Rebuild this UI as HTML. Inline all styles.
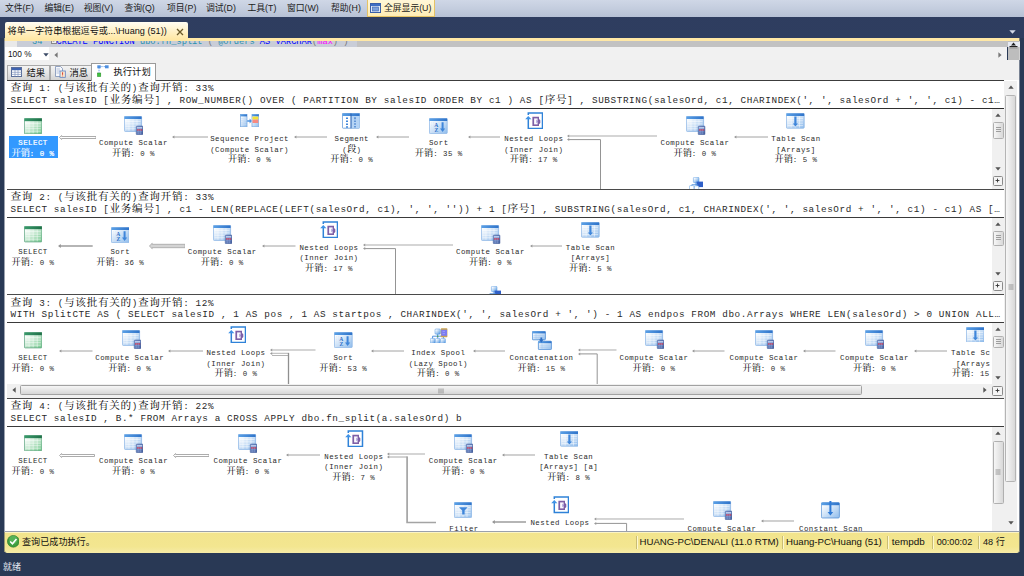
<!DOCTYPE html>
<html lang="zh-CN"><head><meta charset="utf-8"><title>SSMS</title><style>
*{box-sizing:border-box;margin:0;padding:0}
html,body{width:1024px;height:576px;overflow:hidden;background:#293955}
body{position:relative;font-family:"Liberation Sans","Noto Sans CJK SC",sans-serif;font-size:9px;color:#000;line-height:1}
.a{position:absolute}
.menubar{left:0;top:0;width:1024px;height:17px;background:linear-gradient(#cfd7e6,#c4cdde 50%,#b6c1d5)}
.mi{position:absolute;top:0;height:17px;line-height:17px;font-size:8.8px;color:#1b1b1b;white-space:nowrap}
.band{left:0;top:17px;width:1024px;height:21px;background-color:#2b3a5c;background-image:radial-gradient(circle,#364569 0.5px,transparent 0.8px);background-size:2px 2px}
.yline{left:5px;top:38px;width:1014px;height:3px;background:#ffe8a6}
.doctab{left:5px;top:22px;width:183px;height:17px;background:linear-gradient(#fffdf3,#fff3cf 45%,#ffe8a6);border-radius:2px 2px 0 0}
.doctab span{position:absolute;left:2.5px;top:0;line-height:18px;font-size:9.15px;white-space:nowrap;color:#111}
.mono{font-family:"Liberation Mono","Noto Serif CJK SC",monospace}
.hdr{position:absolute;left:10.5px;white-space:pre;font-family:"Liberation Mono","Noto Serif CJK SC",monospace;font-size:9.3px;letter-spacing:0.61px;height:13px;line-height:13px;color:#2a2a2a}
.hdr b{font-weight:normal;font-size:10.6px;letter-spacing:0.7px;color:#000}
.nl{position:absolute;width:140px;text-align:center;white-space:pre;font-family:"Liberation Mono","Noto Serif CJK SC",monospace;font-size:7.4px;letter-spacing:0.49px;height:10px;line-height:10px;color:#2a2a2a}
.nl b{font-weight:normal;font-size:9.2px;letter-spacing:0;color:#000}
.hl{position:absolute;background:#3399ff}
.nl.w{color:#fff;-webkit-text-stroke:0.2px #fff}
.nl.w b{color:#fff;-webkit-text-stroke:0.15px #fff}
.pane{position:absolute;background:#fff;overflow:hidden}
.sb{position:absolute;background:#f0f0f0}
.st{position:absolute;top:533px;height:19px;line-height:18px;font-size:9.15px;white-space:nowrap;color:#111}
.sep{position:absolute;top:536px;width:1px;height:13px;background:#c9bd74;border-right:1px solid #fdf7cf;box-sizing:content-box}
</style></head><body>
<div class="a menubar"></div>
<div class="mi" style="left:5px">文件(F)</div>
<div class="mi" style="left:44.5px">编辑(E)</div>
<div class="mi" style="left:83.8px">视图(V)</div>
<div class="mi" style="left:124.5px">查询(Q)</div>
<div class="mi" style="left:167px">项目(P)</div>
<div class="mi" style="left:206px">调试(D)</div>
<div class="mi" style="left:247.5px">工具(T)</div>
<div class="mi" style="left:287px">窗口(W)</div>
<div class="mi" style="left:331px">帮助(H)</div>
<div class="a" style="left:366.5px;top:0;width:68px;height:17px;background:linear-gradient(#fff7d8,#ffedb5);border:1px solid #e5c365;border-top:none"></div>
<svg class="a" style="left:369.5px;top:3px" width="11" height="10" viewBox="0 0 11 10"><rect x="0.5" y="0.5" width="10" height="9" fill="#dfeaf8" stroke="#3a5fa8"/><rect x="1" y="1" width="9" height="2" fill="#3f6fc4"/><rect x="2.5" y="4" width="6" height="4" fill="#7da2dc" stroke="#3a5fa8" stroke-width="0.6"/></svg>
<div class="mi" style="left:384px">全屏显示(U)</div>
<div class="a band"></div>
<div class="a yline"></div>
<div class="a doctab"><span>将单一字符串根据逗号或...\Huang (51))</span><svg class="a" style="left:171px;top:5.5px" width="8" height="8" viewBox="0 0 8 8"><path d="M1 1L7 7M7 1L1 7" stroke="#6b5a2a" stroke-width="1.3" fill="none"/></svg></div>
<svg class="a" style="left:1008.6px;top:29.6px" width="7" height="4" viewBox="0 0 7 4"><path d="M0.3 0.3H6.7L3.5 3.7Z" fill="#d5dbe8"/></svg>
<div class="a" style="left:5px;top:41px;width:1014px;height:6px;background:#c2c2c2;overflow:hidden"><div class="a" style="left:0;top:0;width:12px;height:6px;background:#e9e9e9"></div><div class="a" style="left:12px;top:0;width:340px;height:6px;background:#c9cdd7"></div><div class="a mono" style="left:27px;top:-4px;font-size:8.7px;line-height:10px;white-space:pre;color:#2b91af">34</div><div class="a" style="left:45.5px;top:-3px;width:6px;height:6px;border:1px solid #888;background:#eee;font-size:6px;line-height:4px;text-align:center;color:#555">-</div><div class="a mono" style="left:51.5px;top:-4px;font-size:8.7px;line-height:10px;white-space:pre;color:#00f">CREATE FUNCTION <span style="color:#2b91af">dbo.fn_split</span> <span style="color:#777">(</span> <span style="color:#2b91af">@orders</span> AS VARCHAR<span style="color:#777">(</span><span style="color:#f0f">max</span><span style="color:#777">) )</span></div></div>
<div class="a" style="left:1007.5px;top:41px;width:12px;height:19px;background:#bdbdbd"></div>
<div class="a" style="left:1007.5px;top:41.5px;width:12px;height:5.5px;background:#e6eaf3"></div>
<svg class="a" style="left:1009px;top:42px" width="9" height="7" viewBox="0 0 9 7"><path d="M4.5 0.5L7 3.5H2Z" fill="#222"/><rect x="0.5" y="4" width="8" height="1" fill="#222"/><rect x="0.5" y="5.6" width="8" height="0.7" fill="#777"/></svg>
<div class="a" style="left:5px;top:47px;width:1002px;height:13px;background:#f1f1f1"></div>
<div class="a" style="left:5px;top:47px;width:44px;height:13px;background:#fff"></div>
<div class="a" style="left:8px;top:47px;line-height:14px;font-size:8.3px;color:#111">100 %</div>
<svg class="a" style="left:42.5px;top:53px" width="6" height="4" viewBox="0 0 6 4"><path d="M0.3 0.3H5.7L3 3.6Z" fill="#3b4a66"/></svg>
<svg class="a" style="left:54px;top:51.5px" width="4" height="6" viewBox="0 0 4 6"><path d="M3.6 0.3V5.7L0.4 3Z" fill="#777"/></svg>
<svg class="a" style="left:998px;top:51.5px" width="4" height="6" viewBox="0 0 4 6"><path d="M0.4 0.3V5.7L3.6 3Z" fill="#777"/></svg>
<div class="a" style="left:5px;top:60px;width:1014px;height:472px;background:#f0f0f0"></div>
<div class="a" style="left:6.5px;top:64.5px;width:43px;height:15px;background:linear-gradient(#f3f3f3,#e6e6e6 50%,#d2d2d2);border:1px solid #a9a9a9;border-bottom:none"></div>
<div class="a" style="left:49.5px;top:64.5px;width:42px;height:15px;background:linear-gradient(#f3f3f3,#e6e6e6 50%,#d2d2d2);border:1px solid #a9a9a9;border-bottom:none"></div>
<svg class="a" style="left:11px;top:67px" width="11" height="10" viewBox="0 0 11 10"><rect x="0.5" y="0.5" width="10" height="9" fill="#fff" stroke="#5a6e9a"/><rect x="1" y="1" width="9" height="2.2" fill="#3f63b0"/><path d="M4 3V9.5M7 3V9.5M0.5 5.3H10.5M0.5 7.4H10.5" stroke="#7f93bd" stroke-width="0.7"/></svg>
<div class="a" style="left:26.5px;top:64.5px;line-height:17px;font-size:9.3px;color:#111">结果</div>
<svg class="a" style="left:54.5px;top:66px" width="11" height="12" viewBox="0 0 11 12"><path d="M0.5 0.5H5.5L7.5 2.5V10.5H0.5Z" fill="#f6f8fc" stroke="#7b8fb5" stroke-width="0.8"/><path d="M1.5 3H5M1.5 5H5M1.5 7H4" stroke="#9fb0cf" stroke-width="0.7"/><rect x="5" y="5" width="5.3" height="6.3" fill="#fbe9d0" stroke="#5b7fc0" stroke-width="0.8"/><path d="M7.6 6.3V8.8M7.6 9.6V10.3" stroke="#d23a2a" stroke-width="1"/></svg>
<div class="a" style="left:69.5px;top:64.5px;line-height:17px;font-size:9.3px;color:#111">消息</div>
<svg class="a" style="left:0;top:0" width="0" height="0"><defs>
<linearGradient id="gB" x1="0" y1="0" x2="1" y2="1"><stop offset="0.1" stop-color="#ffffff"/><stop offset="1" stop-color="#8fbcec"/></linearGradient>
<linearGradient id="gH" x1="0" y1="0" x2="1" y2="0"><stop offset="0" stop-color="#5aa0e6"/><stop offset="1" stop-color="#2f73c9"/></linearGradient>
<linearGradient id="gG" x1="0" y1="0" x2="1" y2="1"><stop offset="0.12" stop-color="#ffffff"/><stop offset="1" stop-color="#74c98e"/></linearGradient>
<linearGradient id="gGH" x1="0" y1="0" x2="1" y2="0"><stop offset="0" stop-color="#3a9a6c"/><stop offset="1" stop-color="#1f7048"/></linearGradient>
<linearGradient id="gC" x1="0" y1="0" x2="1" y2="1"><stop offset="0" stop-color="#7d9bd2"/><stop offset="1" stop-color="#3c5796"/></linearGradient>
<linearGradient id="gT" x1="0" y1="0" x2="0" y2="1"><stop offset="0" stop-color="#f8f8f8"/><stop offset="1" stop-color="#d4d4d4"/></linearGradient>
<linearGradient id="gTv" x1="0" y1="0" x2="1" y2="0"><stop offset="0" stop-color="#f8f8f8"/><stop offset="1" stop-color="#d4d4d4"/></linearGradient>
<linearGradient id="gBox" x1="0" y1="0" x2="1" y2="1"><stop offset="0.15" stop-color="#ffffff"/><stop offset="1" stop-color="#4d94e0"/></linearGradient>
</defs></svg>
<div class="a" style="left:5px;top:80px;width:1014px;height:452px;background:#fff"></div>
<div class="a" style="left:7px;top:80px;width:997px;height:1px;background:#3c3c3c"></div>
<div class="hdr" style="top:82.1px"><b>查询</b> 1: (<b>与该批有关的</b>)<b>查询开销</b>: 33%</div>
<div class="hdr" style="top:93.8px">SELECT salesID [<b>业务编号</b>] , ROW_NUMBER() OVER ( PARTITION BY salesID ORDER BY c1 ) AS [<b>序号</b>] , SUBSTRING(salesOrd, c1, CHARINDEX(', ', salesOrd + ', ', c1) - c1…</div>
<div class="a" style="left:7px;top:108px;width:997px;height:1px;background:#2e2e2e"></div>
<div class="pane" style="left:7px;top:109px;width:985px;height:80px">
<div class="a" style="left:-7px;top:-109px;width:1024px;height:576px">
<div class="hl" style="left:8.5px;top:136.2px;width:49.2px;height:21.6px"></div>
<svg class="a" style="left:23.8px;top:117.6px" width="18.3" height="16.3" viewBox="0 0 18.3 16.3"><rect x="0.4" y="0.4" width="17.5" height="15.5" rx="0.8" fill="url(#gG)" stroke="#5fa582" stroke-width="0.8"/><rect x="0.4" y="0.4" width="17.5" height="2.8" fill="url(#gGH)"/><path d="M1.5 5.70H16.8M1.5 8.20H16.8M1.5 10.70H16.8M1.5 13.20H16.8M5.08 3.5999999999999996V15.3M9.15 3.5999999999999996V15.3M13.23 3.5999999999999996V15.3" stroke="#ffffff" stroke-width="0.5" fill="none"/></svg>
<div class="nl w" style="left:-37.00px;top:138.30px">SELECT</div><div class="nl w" style="left:-37.00px;top:149.40px"><b>开销</b>: 0 %</div>
<svg class="a" style="left:58.5px;top:133px" width="37.5" height="9" viewBox="0 0 37.5 9"><path d="M0.5 4.5L2.6 2.5V3.5H37.0V5.5H2.6V6.5Z" fill="#ffffff" stroke="#a3a3a3" stroke-width="0.9"/></svg>
<svg class="a" style="left:124px;top:116px" width="19.4" height="19" viewBox="0 0 19.4 19"><rect x="0.4" y="0.4" width="17.2" height="15.0" rx="0.8" fill="url(#gB)" stroke="#8db6e6" stroke-width="0.8"/><rect x="0.4" y="0.4" width="17.2" height="2.6" fill="url(#gH)"/><path d="M1.5 5.44H16.5M1.5 7.88H16.5M1.5 10.32H16.5M1.5 12.76H16.5M5.00 3.4000000000000004V14.8M9.00 3.4000000000000004V14.8M13.00 3.4000000000000004V14.8" stroke="#ffffff" stroke-width="0.5" fill="none"/><rect x="12.2" y="10" width="6.8" height="8.8" rx="0.8" fill="url(#gC)" stroke="#4a63a0" stroke-width="0.5"/><rect x="13" y="11" width="5.2" height="1.6" fill="#b9c9ec"/><rect x="13" y="13.3" width="5.2" height="1.3" fill="#e0455a"/><path d="M13 15.6H18.2M13 17.1H18.2M14.7 13.3V18.3M16.5 13.3V18.3" stroke="#8ea3d6" stroke-width="0.45"/></svg>
<div class="nl" style="left:63.50px;top:138.30px">Compute Scalar</div><div class="nl" style="left:63.50px;top:149.40px"><b>开销</b>: 0 %</div>
<svg class="a" style="left:172px;top:133.1px" width="36" height="8" viewBox="0 0 36 8"><path d="M1 4H36" stroke="#a2a2a2" stroke-width="1" fill="none"/><path d="M0 4L2.4 2.6V5.4Z" fill="#9a9a9a"/></svg>
<svg class="a" style="left:240px;top:114px" width="19.2" height="13.2" viewBox="0 0 19.2 13.2"><rect x="0.4" y="0.4" width="6.6" height="12.4" fill="url(#gB)" stroke="#7fadE2" stroke-width="0.8"/><rect x="0.4" y="0.4" width="6.6" height="2" fill="url(#gH)"/><path d="M1 4.5H6.4M1 6.5H6.4M1 8.5H6.4M1 10.5H6.4" stroke="#c6ddf6" stroke-width="0.5"/><path d="M7.2 6.2H9.6V4.6L12 7L9.6 9.4V7.8H7.2Z" fill="#4a90e0"/><rect x="12" y="0.4" width="6.8" height="12.4" fill="url(#gB)" stroke="#7fade2" stroke-width="0.8"/><rect x="12" y="0.4" width="6.8" height="2" fill="url(#gH)"/><rect x="12.5" y="2.6" width="5.8" height="3" fill="#f2e338"/><rect x="12.5" y="5.6" width="5.8" height="3.4" fill="#f78a80"/></svg>
<div class="nl" style="left:179.60px;top:134.10px">Sequence Project</div><div class="nl" style="left:179.60px;top:144.50px">(Compute Scalar)</div><div class="nl" style="left:179.60px;top:155.00px"><b>开销</b>: 0 %</div>
<svg class="a" style="left:293.5px;top:133.1px" width="33.5" height="8" viewBox="0 0 33.5 8"><path d="M1 4H33.5" stroke="#a2a2a2" stroke-width="1" fill="none"/><path d="M0 4L2.4 2.6V5.4Z" fill="#9a9a9a"/></svg>
<svg class="a" style="left:342.3px;top:113px" width="18" height="15.6" viewBox="0 0 18 15.6"><rect x="0.4" y="0.4" width="17.2" height="14.799999999999999" rx="0.8" fill="#ffffff" stroke="#5b94d6" stroke-width="0.8"/><rect x="9" y="0.4" width="8.6" height="14.799999999999999" fill="#b5d4f5"/><rect x="0.4" y="0.4" width="17.2" height="2.6" fill="url(#gH)"/><path d="M9 0.4V15.2" stroke="#2f66b4" stroke-width="1.1"/><path d="M4 4.4H6V6H4ZM4 7.4H6V9H4ZM4 10.4H6V12H4ZM4 13.2H6V14.8H4Z" fill="#3f86da"/><path d="M13 4.2V6.2M13 7.4V9M13 10.2V11.8M13 13V14.6" stroke="#2f6fc4" stroke-width="1.2"/></svg>
<div class="nl" style="left:281.80px;top:134.10px">Segment</div><div class="nl" style="left:281.80px;top:144.50px">(<b>段</b>)</div><div class="nl" style="left:281.80px;top:155.00px"><b>开销</b>: 0 %</div>
<svg class="a" style="left:375.5px;top:133.1px" width="33.5" height="8" viewBox="0 0 33.5 8"><path d="M1 4H33.5" stroke="#a2a2a2" stroke-width="1" fill="none"/><path d="M0 4L2.4 2.6V5.4Z" fill="#9a9a9a"/></svg>
<svg class="a" style="left:429.3px;top:117.7px" width="18.6" height="16" viewBox="0 0 18.6 16"><rect x="0.4" y="0.4" width="17.8" height="15.2" rx="0.8" fill="url(#gB)" stroke="#8db6e6" stroke-width="0.8"/><rect x="0.4" y="0.4" width="17.8" height="2.6" fill="url(#gH)"/><path d="M2.5 4V15M4.5 4V15" stroke="#cfe2f8" stroke-width="0.5" stroke-dasharray="0.8 0.8"/><text x="5.2" y="8.8" font-family="Liberation Serif,serif" font-weight="bold" font-size="5.6" fill="#2a6fc8">A</text><text x="5.4" y="14" font-family="Liberation Serif,serif" font-weight="bold" font-size="5.6" fill="#2a6fc8">Z</text><path d="M12.6 4.2H14.6V10.6H16.2L13.6 14L11 10.6H12.6Z" fill="#3f86da"/></svg>
<div class="nl" style="left:368.80px;top:138.30px">Sort</div><div class="nl" style="left:368.80px;top:149.40px"><b>开销</b>: 35 %</div>
<svg class="a" style="left:467.5px;top:133.1px" width="32.5" height="8" viewBox="0 0 32.5 8"><path d="M1 4H32.5" stroke="#a2a2a2" stroke-width="1" fill="none"/><path d="M0 4L2.4 2.6V5.4Z" fill="#9a9a9a"/></svg>
<svg class="a" style="left:525px;top:111.7px" width="18.4" height="17.4" viewBox="0 0 18.4 17.4"><path d="M3.3 3V0.9H17.5V16.5H3.3V6.6" fill="#fff" stroke="#2f82d8" stroke-width="1.5"/><path d="M0.2 7.3L3.3 3.9L6.4 7.3Z" fill="#3f92e6"/><path d="M7.4 4.8H14V7L15.3 8.2V11L14 12.2V14H7.4Z" fill="#7d5fa6"/><path d="M9.1 6.4H12.6V12.4H9.1Z" fill="#fbf9fe"/><path d="M11.4 7.6L13.4 9.4L11.4 11.2Z" fill="#9c8fd0"/></svg>
<div class="nl" style="left:463.80px;top:134.10px">Nested Loops</div><div class="nl" style="left:463.80px;top:144.50px">(Inner Join)</div><div class="nl" style="left:463.80px;top:155.00px"><b>开销</b>: 17 %</div>
<svg class="a" style="left:567px;top:131.5px" width="92" height="60.5" viewBox="0 0 92 60.5"><path d="M2 4H90" stroke="#ababab" stroke-width="1" fill="none"/><path d="M2 7.6H33.5V59.5" stroke="#949494" stroke-width="1" fill="none"/><path d="M0 4L2.2 2.5V5.5Z M0 7.6L2.2 6.1V9.1Z" fill="#9a9a9a"/></svg>
<svg class="a" style="left:686.3px;top:116.2px" width="19.4" height="19" viewBox="0 0 19.4 19"><rect x="0.4" y="0.4" width="17.2" height="15.0" rx="0.8" fill="url(#gB)" stroke="#8db6e6" stroke-width="0.8"/><rect x="0.4" y="0.4" width="17.2" height="2.6" fill="url(#gH)"/><path d="M1.5 5.44H16.5M1.5 7.88H16.5M1.5 10.32H16.5M1.5 12.76H16.5M5.00 3.4000000000000004V14.8M9.00 3.4000000000000004V14.8M13.00 3.4000000000000004V14.8" stroke="#ffffff" stroke-width="0.5" fill="none"/><rect x="12.2" y="10" width="6.8" height="8.8" rx="0.8" fill="url(#gC)" stroke="#4a63a0" stroke-width="0.5"/><rect x="13" y="11" width="5.2" height="1.6" fill="#b9c9ec"/><rect x="13" y="13.3" width="5.2" height="1.3" fill="#e0455a"/><path d="M13 15.6H18.2M13 17.1H18.2M14.7 13.3V18.3M16.5 13.3V18.3" stroke="#8ea3d6" stroke-width="0.45"/></svg>
<div class="nl" style="left:625.00px;top:138.30px">Compute Scalar</div><div class="nl" style="left:625.00px;top:149.40px"><b>开销</b>: 0 %</div>
<svg class="a" style="left:733.5px;top:133.1px" width="34.0" height="8" viewBox="0 0 34.0 8"><path d="M1 4H34.0" stroke="#a2a2a2" stroke-width="1" fill="none"/><path d="M0 4L2.4 2.6V5.4Z" fill="#9a9a9a"/></svg>
<svg class="a" style="left:786.2px;top:113px" width="18.6" height="15.6" viewBox="0 0 18.6 15.6"><rect x="0.4" y="0.4" width="17.8" height="14.799999999999999" rx="0.8" fill="url(#gB)" stroke="#8db6e6" stroke-width="0.8"/><rect x="0.4" y="0.4" width="17.8" height="2.6" fill="url(#gH)"/><path d="M1.5 5.40H17.1M1.5 7.80H17.1M1.5 10.20H17.1M1.5 12.60H17.1M5.15 3.4000000000000004V14.6M9.30 3.4000000000000004V14.6M13.45 3.4000000000000004V14.6" stroke="#ffffff" stroke-width="0.5" fill="none"/><path d="M8.3 3.4H10.5V10.4H12L9.4 13.6L6.8 10.4H8.3Z" fill="#3f86da"/></svg>
<div class="nl" style="left:726.00px;top:134.10px">Table Scan</div><div class="nl" style="left:726.00px;top:144.50px">[Arrays]</div><div class="nl" style="left:726.00px;top:155.00px"><b>开销</b>: 5 %</div>
<svg class="a" style="left:688.6px;top:177.2px" width="14.4" height="14" viewBox="0 0 14.4 14"><rect x="4.4" y="0.3" width="5.6" height="5.4" rx="1" fill="url(#gBox)" stroke="#4d94e0" stroke-width="0.5"/><rect x="7.6" y="4.6" width="6.4" height="5.5" fill="#2f5fc8"/><path d="M7 5.6V7.8M2.8 10V7.8H9" stroke="#3f86da" stroke-width="0.9" fill="none"/><rect x="0.4" y="8.6" width="4.6" height="5" rx="1" fill="#ffffff" stroke="#4d94e0" stroke-width="0.5"/><rect x="5.4" y="8.8" width="4.4" height="5" rx="1" fill="#ffffff" stroke="#4d94e0" stroke-width="0.5"/></svg>
</div></div>
<div class="sb" style="left:992px;top:109px;width:12px;height:80px"></div><svg class="a" style="left:995px;top:113px" width="6" height="4" viewBox="0 0 6 4"><path d="M0.3 3.7L3 0.4L5.7 3.7Z" fill="#555"/></svg><div class="a" style="left:992.5px;top:122px;width:11px;height:17px;background:linear-gradient(90deg,#f6f6f6,#d9d9d9);border:1px solid #b0b0b0;border-radius:1.5px"></div><svg class="a" style="left:995.5px;top:127px" width="5" height="6" viewBox="0 0 5 6"><path d="M0 0.5H5M0 2.5H5M0 4.5H5" stroke="#8a8a8a" stroke-width="0.8"/></svg><svg class="a" style="left:995px;top:167px" width="6" height="4" viewBox="0 0 6 4"><path d="M0.3 0.3L3 3.6L5.7 0.3Z" fill="#555"/></svg><div class="a" style="left:992.5px;top:175.7px;width:10.5px;height:10px;background:#f4f4f4;border:1px solid #8a8a8a;border-radius:1.5px"></div><svg class="a" style="left:995.2px;top:178.2px" width="5" height="5" viewBox="0 0 5 5"><path d="M2.5 0.6V4.4M0.6 2.5H4.4" stroke="#333" stroke-width="0.9"/></svg>
<div class="a" style="left:7px;top:189px;width:997px;height:1px;background:#4a4a4a"></div>
<div class="hdr" style="top:191.1px"><b>查询</b> 2: (<b>与该批有关的</b>)<b>查询开销</b>: 33%</div>
<div class="hdr" style="top:202.8px">SELECT salesID [<b>业务编号</b>] , c1 - LEN(REPLACE(LEFT(salesOrd, c1), ', ', '')) + 1 [<b>序号</b>] , SUBSTRING(salesOrd, c1, CHARINDEX(', ', salesOrd + ', ', c1) - c1) AS […</div>
<div class="a" style="left:7px;top:217px;width:997px;height:1px;background:#3a3a3a"></div>
<div class="pane" style="left:7px;top:218px;width:985px;height:76px"><div class="a" style="left:-7px;top:-218px;width:1024px;height:576px">
<svg class="a" style="left:23.8px;top:226.4px" width="18.3" height="16.3" viewBox="0 0 18.3 16.3"><rect x="0.4" y="0.4" width="17.5" height="15.5" rx="0.8" fill="url(#gG)" stroke="#5fa582" stroke-width="0.8"/><rect x="0.4" y="0.4" width="17.5" height="2.8" fill="url(#gGH)"/><path d="M1.5 5.70H16.8M1.5 8.20H16.8M1.5 10.70H16.8M1.5 13.20H16.8M5.08 3.5999999999999996V15.3M9.15 3.5999999999999996V15.3M13.23 3.5999999999999996V15.3" stroke="#ffffff" stroke-width="0.5" fill="none"/></svg>
<div class="nl" style="left:-37.00px;top:246.90px">SELECT</div><div class="nl" style="left:-37.00px;top:258.00px"><b>开销</b>: 0 %</div>
<svg class="a" style="left:58.3px;top:241.9px" width="34.7" height="8" viewBox="0 0 34.7 8"><path d="M1.5 4H34.7" stroke="#9c9c9c" stroke-width="1.6" fill="none"/><path d="M0 4L2.8 2V6Z" fill="#969696"/></svg>
<svg class="a" style="left:110.8px;top:226.5px" width="18.6" height="16" viewBox="0 0 18.6 16"><rect x="0.4" y="0.4" width="17.8" height="15.2" rx="0.8" fill="url(#gB)" stroke="#8db6e6" stroke-width="0.8"/><rect x="0.4" y="0.4" width="17.8" height="2.6" fill="url(#gH)"/><path d="M2.5 4V15M4.5 4V15" stroke="#cfe2f8" stroke-width="0.5" stroke-dasharray="0.8 0.8"/><text x="5.2" y="8.8" font-family="Liberation Serif,serif" font-weight="bold" font-size="5.6" fill="#2a6fc8">A</text><text x="5.4" y="14" font-family="Liberation Serif,serif" font-weight="bold" font-size="5.6" fill="#2a6fc8">Z</text><path d="M12.6 4.2H14.6V10.6H16.2L13.6 14L11 10.6H12.6Z" fill="#3f86da"/></svg>
<div class="nl" style="left:50.30px;top:246.90px">Sort</div><div class="nl" style="left:50.30px;top:258.00px"><b>开销</b>: 36 %</div>
<svg class="a" style="left:148.5px;top:241.9px" width="36.5" height="8" viewBox="0 0 36.5 8"><path d="M0.4 4L3.2 1.3V2.3H36.1V5.7H3.2V6.7Z" fill="#d4d4d4" stroke="#a4a4a4" stroke-width="0.8"/></svg>
<svg class="a" style="left:213px;top:225px" width="19.4" height="19" viewBox="0 0 19.4 19"><rect x="0.4" y="0.4" width="17.2" height="15.0" rx="0.8" fill="url(#gB)" stroke="#8db6e6" stroke-width="0.8"/><rect x="0.4" y="0.4" width="17.2" height="2.6" fill="url(#gH)"/><path d="M1.5 5.44H16.5M1.5 7.88H16.5M1.5 10.32H16.5M1.5 12.76H16.5M5.00 3.4000000000000004V14.8M9.00 3.4000000000000004V14.8M13.00 3.4000000000000004V14.8" stroke="#ffffff" stroke-width="0.5" fill="none"/><rect x="12.2" y="10" width="6.8" height="8.8" rx="0.8" fill="url(#gC)" stroke="#4a63a0" stroke-width="0.5"/><rect x="13" y="11" width="5.2" height="1.6" fill="#b9c9ec"/><rect x="13" y="13.3" width="5.2" height="1.3" fill="#e0455a"/><path d="M13 15.6H18.2M13 17.1H18.2M14.7 13.3V18.3M16.5 13.3V18.3" stroke="#8ea3d6" stroke-width="0.45"/></svg>
<div class="nl" style="left:152.30px;top:246.90px">Compute Scalar</div><div class="nl" style="left:152.30px;top:258.00px"><b>开销</b>: 0 %</div>
<svg class="a" style="left:262px;top:241.9px" width="33.5" height="8" viewBox="0 0 33.5 8"><path d="M1 4H33.5" stroke="#a2a2a2" stroke-width="1" fill="none"/><path d="M0 4L2.4 2.6V5.4Z" fill="#9a9a9a"/></svg>
<svg class="a" style="left:320px;top:220.8px" width="18.4" height="17.4" viewBox="0 0 18.4 17.4"><path d="M3.3 3V0.9H17.5V16.5H3.3V6.6" fill="#fff" stroke="#2f82d8" stroke-width="1.5"/><path d="M0.2 7.3L3.3 3.9L6.4 7.3Z" fill="#3f92e6"/><path d="M7.4 4.8H14V7L15.3 8.2V11L14 12.2V14H7.4Z" fill="#7d5fa6"/><path d="M9.1 6.4H12.6V12.4H9.1Z" fill="#fbf9fe"/><path d="M11.4 7.6L13.4 9.4L11.4 11.2Z" fill="#9c8fd0"/></svg>
<div class="nl" style="left:259.00px;top:242.60px">Nested Loops</div><div class="nl" style="left:259.00px;top:253.00px">(Inner Join)</div><div class="nl" style="left:259.00px;top:263.50px"><b>开销</b>: 17 %</div>
<svg class="a" style="left:362.5px;top:240.5px" width="92.0" height="56.5" viewBox="0 0 92.0 56.5"><path d="M2 4H90.0" stroke="#ababab" stroke-width="1" fill="none"/><path d="M2 7.6H32.5V55.5" stroke="#949494" stroke-width="1" fill="none"/><path d="M0 4L2.2 2.5V5.5Z M0 7.6L2.2 6.1V9.1Z" fill="#9a9a9a"/></svg>
<svg class="a" style="left:481.3px;top:225.2px" width="19.4" height="19" viewBox="0 0 19.4 19"><rect x="0.4" y="0.4" width="17.2" height="15.0" rx="0.8" fill="url(#gB)" stroke="#8db6e6" stroke-width="0.8"/><rect x="0.4" y="0.4" width="17.2" height="2.6" fill="url(#gH)"/><path d="M1.5 5.44H16.5M1.5 7.88H16.5M1.5 10.32H16.5M1.5 12.76H16.5M5.00 3.4000000000000004V14.8M9.00 3.4000000000000004V14.8M13.00 3.4000000000000004V14.8" stroke="#ffffff" stroke-width="0.5" fill="none"/><rect x="12.2" y="10" width="6.8" height="8.8" rx="0.8" fill="url(#gC)" stroke="#4a63a0" stroke-width="0.5"/><rect x="13" y="11" width="5.2" height="1.6" fill="#b9c9ec"/><rect x="13" y="13.3" width="5.2" height="1.3" fill="#e0455a"/><path d="M13 15.6H18.2M13 17.1H18.2M14.7 13.3V18.3M16.5 13.3V18.3" stroke="#8ea3d6" stroke-width="0.45"/></svg>
<div class="nl" style="left:420.50px;top:246.90px">Compute Scalar</div><div class="nl" style="left:420.50px;top:258.00px"><b>开销</b>: 0 %</div>
<svg class="a" style="left:529.5px;top:241.9px" width="32.5" height="8" viewBox="0 0 32.5 8"><path d="M1 4H32.5" stroke="#a2a2a2" stroke-width="1" fill="none"/><path d="M0 4L2.4 2.6V5.4Z" fill="#9a9a9a"/></svg>
<svg class="a" style="left:581px;top:222px" width="18.6" height="15.6" viewBox="0 0 18.6 15.6"><rect x="0.4" y="0.4" width="17.8" height="14.799999999999999" rx="0.8" fill="url(#gB)" stroke="#8db6e6" stroke-width="0.8"/><rect x="0.4" y="0.4" width="17.8" height="2.6" fill="url(#gH)"/><path d="M1.5 5.40H17.1M1.5 7.80H17.1M1.5 10.20H17.1M1.5 12.60H17.1M5.15 3.4000000000000004V14.6M9.30 3.4000000000000004V14.6M13.45 3.4000000000000004V14.6" stroke="#ffffff" stroke-width="0.5" fill="none"/><path d="M8.3 3.4H10.5V10.4H12L9.4 13.6L6.8 10.4H8.3Z" fill="#3f86da"/></svg>
<div class="nl" style="left:520.50px;top:242.60px">Table Scan</div><div class="nl" style="left:520.50px;top:253.00px">[Arrays]</div><div class="nl" style="left:520.50px;top:263.50px"><b>开销</b>: 5 %</div>
<svg class="a" style="left:487.4px;top:286.4px" width="14.4" height="8" viewBox="0 0 14.4 8"><rect x="4.4" y="0.3" width="5.6" height="5.4" rx="1" fill="url(#gBox)" stroke="#4d94e0" stroke-width="0.5"/><rect x="7.6" y="4.6" width="6.4" height="5.5" fill="#2f5fc8"/><path d="M7 5.6V7.8M2.8 10V7.8H9" stroke="#3f86da" stroke-width="0.9" fill="none"/><rect x="0.4" y="8.6" width="4.6" height="5" rx="1" fill="#ffffff" stroke="#4d94e0" stroke-width="0.5"/><rect x="5.4" y="8.8" width="4.4" height="5" rx="1" fill="#ffffff" stroke="#4d94e0" stroke-width="0.5"/></svg>
</div></div>
<div class="sb" style="left:992px;top:218px;width:12px;height:76px"></div><svg class="a" style="left:995px;top:222px" width="6" height="4" viewBox="0 0 6 4"><path d="M0.3 3.7L3 0.4L5.7 3.7Z" fill="#555"/></svg><div class="a" style="left:992.5px;top:231px;width:11px;height:15px;background:linear-gradient(90deg,#f6f6f6,#d9d9d9);border:1px solid #b0b0b0;border-radius:1.5px"></div><svg class="a" style="left:995.5px;top:235px" width="5" height="6" viewBox="0 0 5 6"><path d="M0 0.5H5M0 2.5H5M0 4.5H5" stroke="#8a8a8a" stroke-width="0.8"/></svg><svg class="a" style="left:995px;top:272px" width="6" height="4" viewBox="0 0 6 4"><path d="M0.3 0.3L3 3.6L5.7 0.3Z" fill="#555"/></svg><div class="a" style="left:992.5px;top:280.7px;width:10.5px;height:10px;background:#f4f4f4;border:1px solid #8a8a8a;border-radius:1.5px"></div><svg class="a" style="left:995.2px;top:283.2px" width="5" height="5" viewBox="0 0 5 5"><path d="M2.5 0.6V4.4M0.6 2.5H4.4" stroke="#333" stroke-width="0.9"/></svg>
<div class="a" style="left:7px;top:294px;width:997px;height:1px;background:#4a4a4a"></div>
<div class="hdr" style="top:296.5px"><b>查询</b> 3: (<b>与该批有关的</b>)<b>查询开销</b>: 12%</div>
<div class="hdr" style="top:308.2px">WITH SplitCTE AS ( SELECT salesID , 1 AS pos , 1 AS startpos , CHARINDEX(', ', salesOrd + ', ') - 1 AS endpos FROM dbo.Arrays WHERE LEN(salesOrd) &gt; 0 UNION ALL…</div>
<div class="a" style="left:7px;top:322px;width:997px;height:1px;background:#3a3a3a"></div>
<div class="pane" style="left:7px;top:323px;width:983px;height:61px"><div class="a" style="left:-7px;top:-323px;width:1024px;height:576px">
<svg class="a" style="left:23.8px;top:332.3px" width="18.3" height="16.3" viewBox="0 0 18.3 16.3"><rect x="0.4" y="0.4" width="17.5" height="15.5" rx="0.8" fill="url(#gG)" stroke="#5fa582" stroke-width="0.8"/><rect x="0.4" y="0.4" width="17.5" height="2.8" fill="url(#gGH)"/><path d="M1.5 5.70H16.8M1.5 8.20H16.8M1.5 10.70H16.8M1.5 13.20H16.8M5.08 3.5999999999999996V15.3M9.15 3.5999999999999996V15.3M13.23 3.5999999999999996V15.3" stroke="#ffffff" stroke-width="0.5" fill="none"/></svg>
<div class="nl" style="left:-37.00px;top:352.60px">SELECT</div><div class="nl" style="left:-37.00px;top:363.70px"><b>开销</b>: 0 %</div>
<svg class="a" style="left:59px;top:347.4px" width="33.5" height="8" viewBox="0 0 33.5 8"><path d="M1 4H33.5" stroke="#a2a2a2" stroke-width="1" fill="none"/><path d="M0 4L2.4 2.6V5.4Z" fill="#9a9a9a"/></svg>
<svg class="a" style="left:121.7px;top:330.3px" width="19.4" height="19" viewBox="0 0 19.4 19"><rect x="0.4" y="0.4" width="17.2" height="15.0" rx="0.8" fill="url(#gB)" stroke="#8db6e6" stroke-width="0.8"/><rect x="0.4" y="0.4" width="17.2" height="2.6" fill="url(#gH)"/><path d="M1.5 5.44H16.5M1.5 7.88H16.5M1.5 10.32H16.5M1.5 12.76H16.5M5.00 3.4000000000000004V14.8M9.00 3.4000000000000004V14.8M13.00 3.4000000000000004V14.8" stroke="#ffffff" stroke-width="0.5" fill="none"/><rect x="12.2" y="10" width="6.8" height="8.8" rx="0.8" fill="url(#gC)" stroke="#4a63a0" stroke-width="0.5"/><rect x="13" y="11" width="5.2" height="1.6" fill="#b9c9ec"/><rect x="13" y="13.3" width="5.2" height="1.3" fill="#e0455a"/><path d="M13 15.6H18.2M13 17.1H18.2M14.7 13.3V18.3M16.5 13.3V18.3" stroke="#8ea3d6" stroke-width="0.45"/></svg>
<div class="nl" style="left:59.70px;top:352.60px">Compute Scalar</div><div class="nl" style="left:59.70px;top:363.70px"><b>开销</b>: 0 %</div>
<svg class="a" style="left:167.5px;top:347.4px" width="35.0" height="8" viewBox="0 0 35.0 8"><path d="M1 4H35.0" stroke="#a2a2a2" stroke-width="1" fill="none"/><path d="M0 4L2.4 2.6V5.4Z" fill="#9a9a9a"/></svg>
<svg class="a" style="left:227.6px;top:326.1px" width="18.4" height="17.4" viewBox="0 0 18.4 17.4"><path d="M3.3 3V0.9H17.5V16.5H3.3V6.6" fill="#fff" stroke="#2f82d8" stroke-width="1.5"/><path d="M0.2 7.3L3.3 3.9L6.4 7.3Z" fill="#3f92e6"/><path d="M7.4 4.8H14V7L15.3 8.2V11L14 12.2V14H7.4Z" fill="#7d5fa6"/><path d="M9.1 6.4H12.6V12.4H9.1Z" fill="#fbf9fe"/><path d="M11.4 7.6L13.4 9.4L11.4 11.2Z" fill="#9c8fd0"/></svg>
<div class="nl" style="left:166.00px;top:348.40px">Nested Loops</div><div class="nl" style="left:166.00px;top:358.80px">(Inner Join)</div><div class="nl" style="left:166.00px;top:369.30px"><b>开销</b>: 0 %</div>
<svg class="a" style="left:269.5px;top:345.5px" width="47.5" height="41.5" viewBox="0 0 47.5 41.5"><path d="M2 4H45.5" stroke="#ababab" stroke-width="1" fill="none"/><path d="M2 7.3H18.5M2 9.5H18.5" stroke="#a2a2a2" stroke-width="0.8" fill="none"/><path d="M18.5 6.8999999999999995V40.5" stroke="#8f8f8f" stroke-width="1.3" fill="none"/><path d="M0 4L2.2 2.5V5.5Z M0 7.6L2.2 6.1V9.1Z" fill="#9a9a9a"/></svg>
<svg class="a" style="left:334px;top:332.0px" width="18.6" height="16" viewBox="0 0 18.6 16"><rect x="0.4" y="0.4" width="17.8" height="15.2" rx="0.8" fill="url(#gB)" stroke="#8db6e6" stroke-width="0.8"/><rect x="0.4" y="0.4" width="17.8" height="2.6" fill="url(#gH)"/><path d="M2.5 4V15M4.5 4V15" stroke="#cfe2f8" stroke-width="0.5" stroke-dasharray="0.8 0.8"/><text x="5.2" y="8.8" font-family="Liberation Serif,serif" font-weight="bold" font-size="5.6" fill="#2a6fc8">A</text><text x="5.4" y="14" font-family="Liberation Serif,serif" font-weight="bold" font-size="5.6" fill="#2a6fc8">Z</text><path d="M12.6 4.2H14.6V10.6H16.2L13.6 14L11 10.6H12.6Z" fill="#3f86da"/></svg>
<div class="nl" style="left:273.30px;top:352.60px">Sort</div><div class="nl" style="left:273.30px;top:363.70px"><b>开销</b>: 53 %</div>
<svg class="a" style="left:371px;top:347.4px" width="33" height="8" viewBox="0 0 33 8"><path d="M1 4H33" stroke="#a2a2a2" stroke-width="1" fill="none"/><path d="M0 4L2.4 2.6V5.4Z" fill="#9a9a9a"/></svg>
<svg class="a" style="left:430px;top:327.5px" width="17.8" height="15.8" viewBox="0 0 17.8 15.8"><path d="M7.7 6V8.2M2.6 10.6V8.2H13.4V10.6M7.7 8.2V10.6" stroke="#3f86da" stroke-width="0.9" fill="none"/><rect x="5" y="1" width="5.4" height="5.2" rx="1" fill="url(#gBox)" stroke="#4d94e0" stroke-width="0.5"/><rect x="0.3" y="10.4" width="4.8" height="5" rx="1" fill="url(#gBox)" stroke="#4d94e0" stroke-width="0.5"/><rect x="5.4" y="10.4" width="4.8" height="5" rx="1" fill="url(#gBox)" stroke="#4d94e0" stroke-width="0.5"/><rect x="10.6" y="10.4" width="4.8" height="5" rx="1" fill="url(#gBox)" stroke="#4d94e0" stroke-width="0.5"/><circle cx="7.7" cy="8.2" r="0.8" fill="#5fae3a"/><rect x="10.8" y="0.2" width="6.6" height="9" rx="0.8" fill="#c9a452"/><rect x="11.2" y="1.8" width="5.8" height="6" fill="#7b7cf2"/><path d="M12.6 3.4H15M12.6 5.6H15" stroke="#a9b0ff" stroke-width="0.6"/></svg>
<div class="nl" style="left:368.30px;top:348.40px">Index Spool</div><div class="nl" style="left:368.30px;top:358.80px">(Lazy Spool)</div><div class="nl" style="left:368.30px;top:369.30px"><b>开销</b>: 0 %</div>
<svg class="a" style="left:472.5px;top:347.4px" width="32.5" height="8" viewBox="0 0 32.5 8"><path d="M1 4H32.5" stroke="#a2a2a2" stroke-width="1" fill="none"/><path d="M0 4L2.4 2.6V5.4Z" fill="#9a9a9a"/></svg>
<svg class="a" style="left:532px;top:330.7px" width="19.8" height="19" viewBox="0 0 19.8 19"><rect x="0.4" y="0.4" width="13" height="8.4" rx="0.7" fill="url(#gB)" stroke="#4d8bd4" stroke-width="0.8"/><rect x="0.4" y="0.4" width="13" height="2" fill="url(#gH)"/><path d="M1.5 4.4H12.4M1.5 6.4H12.4M4 2.6V8.4" stroke="#9cc2ee" stroke-width="0.5"/><rect x="6.4" y="10.200000000000001" width="13" height="8.4" rx="0.7" fill="url(#gB)" stroke="#4d8bd4" stroke-width="0.8"/><rect x="6.4" y="10.200000000000001" width="13" height="2" fill="url(#gH)"/><path d="M7.5 14.200000000000001H18.4M7.5 16.200000000000003H18.4M10 12.4V18.200000000000003" stroke="#9cc2ee" stroke-width="0.5"/><path d="M8.4 6.4H10.2V8.6H11.6L9.3 11.8L7 8.6H8.4Z" fill="#2f6fc4"/></svg>
<div class="nl" style="left:471.50px;top:353.20px">Concatenation</div><div class="nl" style="left:471.50px;top:364.30px"><b>开销</b>: 15 %</div>
<svg class="a" style="left:577.5px;top:345.6px" width="40.5" height="41.39999999999998" viewBox="0 0 40.5 41.39999999999998"><path d="M2 4H38.5" stroke="#ababab" stroke-width="1" fill="none"/><path d="M2 7.9H19.200000000000045V40.39999999999998" stroke="#949494" stroke-width="1" fill="none"/><path d="M0 4L2.2 2.5V5.5Z M0 7.9L2.2 6.4V9.4Z" fill="#9a9a9a"/></svg>
<svg class="a" style="left:644.5px;top:330.3px" width="19.4" height="19" viewBox="0 0 19.4 19"><rect x="0.4" y="0.4" width="17.2" height="15.0" rx="0.8" fill="url(#gB)" stroke="#8db6e6" stroke-width="0.8"/><rect x="0.4" y="0.4" width="17.2" height="2.6" fill="url(#gH)"/><path d="M1.5 5.44H16.5M1.5 7.88H16.5M1.5 10.32H16.5M1.5 12.76H16.5M5.00 3.4000000000000004V14.8M9.00 3.4000000000000004V14.8M13.00 3.4000000000000004V14.8" stroke="#ffffff" stroke-width="0.5" fill="none"/><rect x="12.2" y="10" width="6.8" height="8.8" rx="0.8" fill="url(#gC)" stroke="#4a63a0" stroke-width="0.5"/><rect x="13" y="11" width="5.2" height="1.6" fill="#b9c9ec"/><rect x="13" y="13.3" width="5.2" height="1.3" fill="#e0455a"/><path d="M13 15.6H18.2M13 17.1H18.2M14.7 13.3V18.3M16.5 13.3V18.3" stroke="#8ea3d6" stroke-width="0.45"/></svg>
<div class="nl" style="left:584.00px;top:353.20px">Compute Scalar</div><div class="nl" style="left:584.00px;top:364.30px"><b>开销</b>: 0 %</div>
<svg class="a" style="left:754.5px;top:330.3px" width="19.4" height="19" viewBox="0 0 19.4 19"><rect x="0.4" y="0.4" width="17.2" height="15.0" rx="0.8" fill="url(#gB)" stroke="#8db6e6" stroke-width="0.8"/><rect x="0.4" y="0.4" width="17.2" height="2.6" fill="url(#gH)"/><path d="M1.5 5.44H16.5M1.5 7.88H16.5M1.5 10.32H16.5M1.5 12.76H16.5M5.00 3.4000000000000004V14.8M9.00 3.4000000000000004V14.8M13.00 3.4000000000000004V14.8" stroke="#ffffff" stroke-width="0.5" fill="none"/><rect x="12.2" y="10" width="6.8" height="8.8" rx="0.8" fill="url(#gC)" stroke="#4a63a0" stroke-width="0.5"/><rect x="13" y="11" width="5.2" height="1.6" fill="#b9c9ec"/><rect x="13" y="13.3" width="5.2" height="1.3" fill="#e0455a"/><path d="M13 15.6H18.2M13 17.1H18.2M14.7 13.3V18.3M16.5 13.3V18.3" stroke="#8ea3d6" stroke-width="0.45"/></svg>
<div class="nl" style="left:694.00px;top:353.20px">Compute Scalar</div><div class="nl" style="left:694.00px;top:364.30px"><b>开销</b>: 0 %</div>
<svg class="a" style="left:865.0px;top:330.3px" width="19.4" height="19" viewBox="0 0 19.4 19"><rect x="0.4" y="0.4" width="17.2" height="15.0" rx="0.8" fill="url(#gB)" stroke="#8db6e6" stroke-width="0.8"/><rect x="0.4" y="0.4" width="17.2" height="2.6" fill="url(#gH)"/><path d="M1.5 5.44H16.5M1.5 7.88H16.5M1.5 10.32H16.5M1.5 12.76H16.5M5.00 3.4000000000000004V14.8M9.00 3.4000000000000004V14.8M13.00 3.4000000000000004V14.8" stroke="#ffffff" stroke-width="0.5" fill="none"/><rect x="12.2" y="10" width="6.8" height="8.8" rx="0.8" fill="url(#gC)" stroke="#4a63a0" stroke-width="0.5"/><rect x="13" y="11" width="5.2" height="1.6" fill="#b9c9ec"/><rect x="13" y="13.3" width="5.2" height="1.3" fill="#e0455a"/><path d="M13 15.6H18.2M13 17.1H18.2M14.7 13.3V18.3M16.5 13.3V18.3" stroke="#8ea3d6" stroke-width="0.45"/></svg>
<div class="nl" style="left:804.50px;top:353.20px">Compute Scalar</div><div class="nl" style="left:804.50px;top:364.30px"><b>开销</b>: 0 %</div>
<svg class="a" style="left:692px;top:347.4px" width="32.5" height="8" viewBox="0 0 32.5 8"><path d="M1 4H32.5" stroke="#a2a2a2" stroke-width="1" fill="none"/><path d="M0 4L2.4 2.6V5.4Z" fill="#9a9a9a"/></svg>
<svg class="a" style="left:803px;top:347.4px" width="32.5" height="8" viewBox="0 0 32.5 8"><path d="M1 4H32.5" stroke="#a2a2a2" stroke-width="1" fill="none"/><path d="M0 4L2.4 2.6V5.4Z" fill="#9a9a9a"/></svg>
<svg class="a" style="left:913.5px;top:347.4px" width="33.5" height="8" viewBox="0 0 33.5 8"><path d="M1 4H33.5" stroke="#a2a2a2" stroke-width="1" fill="none"/><path d="M0 4L2.4 2.6V5.4Z" fill="#9a9a9a"/></svg>
<svg class="a" style="left:965.7px;top:326.90000000000003px" width="18.6" height="15.6" viewBox="0 0 18.6 15.6"><rect x="0.4" y="0.4" width="17.8" height="14.799999999999999" rx="0.8" fill="url(#gB)" stroke="#8db6e6" stroke-width="0.8"/><rect x="0.4" y="0.4" width="17.8" height="2.6" fill="url(#gH)"/><path d="M1.5 5.40H17.1M1.5 7.80H17.1M1.5 10.20H17.1M1.5 12.60H17.1M5.15 3.4000000000000004V14.6M9.30 3.4000000000000004V14.6M13.45 3.4000000000000004V14.6" stroke="#ffffff" stroke-width="0.5" fill="none"/><path d="M8.3 3.4H10.5V10.4H12L9.4 13.6L6.8 10.4H8.3Z" fill="#3f86da"/></svg>
<div class="nl" style="left:905.70px;top:348.40px">Table Scan</div><div class="nl" style="left:905.70px;top:358.80px">[Arrays]</div><div class="nl" style="left:905.70px;top:369.30px"><b>开销</b>: 15 %</div>
</div></div>
<div class="sb" style="left:992px;top:323px;width:12px;height:61px"></div><svg class="a" style="left:995px;top:327px" width="6" height="4" viewBox="0 0 6 4"><path d="M0.3 3.7L3 0.4L5.7 3.7Z" fill="#555"/></svg><div class="a" style="left:992.5px;top:336px;width:11px;height:12px;background:linear-gradient(90deg,#f6f6f6,#d9d9d9);border:1px solid #b0b0b0;border-radius:1.5px"></div><svg class="a" style="left:995.5px;top:339px" width="5" height="6" viewBox="0 0 5 6"><path d="M0 0.5H5M0 2.5H5M0 4.5H5" stroke="#8a8a8a" stroke-width="0.8"/></svg><svg class="a" style="left:995px;top:376px" width="6" height="4" viewBox="0 0 6 4"><path d="M0.3 0.3L3 3.6L5.7 0.3Z" fill="#555"/></svg>
<div class="sb" style="left:7px;top:384px;width:997px;height:14px"></div>
<svg class="a" style="left:11.5px;top:386.5px" width="4" height="6" viewBox="0 0 4 6"><path d="M3.7 0.3V5.7L0.4 3Z" fill="#555"/></svg>
<div class="a" style="left:19.5px;top:385.3px;width:842.5px;height:10px;background:linear-gradient(#f6f6f6,#d6d6d6);border:1px solid #a2a2a2;border-radius:1.5px"></div>
<svg class="a" style="left:438px;top:387.5px" width="6" height="6" viewBox="0 0 6 6"><path d="M1 0.5V5.5M3 0.5V5.5M5 0.5V5.5" stroke="#777" stroke-width="0.7"/></svg>
<svg class="a" style="left:983px;top:386.5px" width="4" height="6" viewBox="0 0 4 6"><path d="M0.3 0.3V5.7L3.6 3Z" fill="#555"/></svg>
<div class="a" style="left:992px;top:385.5px;width:10.5px;height:10px;background:#f4f4f4;border:1px solid #8a8a8a;border-radius:1.5px"></div>
<svg class="a" style="left:994.7px;top:388px" width="5" height="5" viewBox="0 0 5 5"><path d="M2.5 0.6V4.4M0.6 2.5H4.4" stroke="#333" stroke-width="0.9"/></svg>
<div class="a" style="left:7px;top:398px;width:997px;height:1px;background:#4a4a4a"></div>
<div class="hdr" style="top:400.1px"><b>查询</b> 4: (<b>与该批有关的</b>)<b>查询开销</b>: 22%</div>
<div class="hdr" style="top:411.8px">SELECT salesID , B.* FROM Arrays a CROSS APPLY dbo.fn_split(a.salesOrd) b</div>
<div class="a" style="left:7px;top:426px;width:997px;height:1px;background:#3a3a3a"></div>
<div class="pane" style="left:7px;top:427px;width:985px;height:104px"><div class="a" style="left:-7px;top:-427px;width:1024px;height:576px">
<svg class="a" style="left:23.8px;top:435.2px" width="18.3" height="16.3" viewBox="0 0 18.3 16.3"><rect x="0.4" y="0.4" width="17.5" height="15.5" rx="0.8" fill="url(#gG)" stroke="#5fa582" stroke-width="0.8"/><rect x="0.4" y="0.4" width="17.5" height="2.8" fill="url(#gGH)"/><path d="M1.5 5.70H16.8M1.5 8.20H16.8M1.5 10.70H16.8M1.5 13.20H16.8M5.08 3.5999999999999996V15.3M9.15 3.5999999999999996V15.3M13.23 3.5999999999999996V15.3" stroke="#ffffff" stroke-width="0.5" fill="none"/></svg>
<div class="nl" style="left:-37.00px;top:456.10px">SELECT</div><div class="nl" style="left:-37.00px;top:467.20px"><b>开销</b>: 0 %</div>
<svg class="a" style="left:59px;top:451px" width="36" height="9" viewBox="0 0 36 9"><path d="M0.5 4.5L2.6 2.5V3.5H35.5V5.5H2.6V6.5Z" fill="#ffffff" stroke="#a3a3a3" stroke-width="0.9"/></svg>
<svg class="a" style="left:124px;top:434px" width="19.4" height="19" viewBox="0 0 19.4 19"><rect x="0.4" y="0.4" width="17.2" height="15.0" rx="0.8" fill="url(#gB)" stroke="#8db6e6" stroke-width="0.8"/><rect x="0.4" y="0.4" width="17.2" height="2.6" fill="url(#gH)"/><path d="M1.5 5.44H16.5M1.5 7.88H16.5M1.5 10.32H16.5M1.5 12.76H16.5M5.00 3.4000000000000004V14.8M9.00 3.4000000000000004V14.8M13.00 3.4000000000000004V14.8" stroke="#ffffff" stroke-width="0.5" fill="none"/><rect x="12.2" y="10" width="6.8" height="8.8" rx="0.8" fill="url(#gC)" stroke="#4a63a0" stroke-width="0.5"/><rect x="13" y="11" width="5.2" height="1.6" fill="#b9c9ec"/><rect x="13" y="13.3" width="5.2" height="1.3" fill="#e0455a"/><path d="M13 15.6H18.2M13 17.1H18.2M14.7 13.3V18.3M16.5 13.3V18.3" stroke="#8ea3d6" stroke-width="0.45"/></svg>
<div class="nl" style="left:63.60px;top:456.10px">Compute Scalar</div><div class="nl" style="left:63.60px;top:467.20px"><b>开销</b>: 0 %</div>
<svg class="a" style="left:172.5px;top:451px" width="36.5" height="9" viewBox="0 0 36.5 9"><path d="M0.5 4.5L2.6 2.5V3.5H36.0V5.5H2.6V6.5Z" fill="#ffffff" stroke="#a3a3a3" stroke-width="0.9"/></svg>
<svg class="a" style="left:237.6px;top:434px" width="19.4" height="19" viewBox="0 0 19.4 19"><rect x="0.4" y="0.4" width="17.2" height="15.0" rx="0.8" fill="url(#gB)" stroke="#8db6e6" stroke-width="0.8"/><rect x="0.4" y="0.4" width="17.2" height="2.6" fill="url(#gH)"/><path d="M1.5 5.44H16.5M1.5 7.88H16.5M1.5 10.32H16.5M1.5 12.76H16.5M5.00 3.4000000000000004V14.8M9.00 3.4000000000000004V14.8M13.00 3.4000000000000004V14.8" stroke="#ffffff" stroke-width="0.5" fill="none"/><rect x="12.2" y="10" width="6.8" height="8.8" rx="0.8" fill="url(#gC)" stroke="#4a63a0" stroke-width="0.5"/><rect x="13" y="11" width="5.2" height="1.6" fill="#b9c9ec"/><rect x="13" y="13.3" width="5.2" height="1.3" fill="#e0455a"/><path d="M13 15.6H18.2M13 17.1H18.2M14.7 13.3V18.3M16.5 13.3V18.3" stroke="#8ea3d6" stroke-width="0.45"/></svg>
<div class="nl" style="left:178.00px;top:456.10px">Compute Scalar</div><div class="nl" style="left:178.00px;top:467.20px"><b>开销</b>: 0 %</div>
<svg class="a" style="left:286px;top:451.2px" width="34" height="8" viewBox="0 0 34 8"><path d="M1 4H34" stroke="#a2a2a2" stroke-width="1" fill="none"/><path d="M0 4L2.4 2.6V5.4Z" fill="#9a9a9a"/></svg>
<svg class="a" style="left:345.4px;top:429.8px" width="18.4" height="17.4" viewBox="0 0 18.4 17.4"><path d="M3.3 3V0.9H17.5V16.5H3.3V6.6" fill="#fff" stroke="#2f82d8" stroke-width="1.5"/><path d="M0.2 7.3L3.3 3.9L6.4 7.3Z" fill="#3f92e6"/><path d="M7.4 4.8H14V7L15.3 8.2V11L14 12.2V14H7.4Z" fill="#7d5fa6"/><path d="M9.1 6.4H12.6V12.4H9.1Z" fill="#fbf9fe"/><path d="M11.4 7.6L13.4 9.4L11.4 11.2Z" fill="#9c8fd0"/></svg>
<div class="nl" style="left:283.80px;top:451.80px">Nested Loops</div><div class="nl" style="left:283.80px;top:462.20px">(Inner Join)</div><div class="nl" style="left:283.80px;top:472.70px"><b>开销</b>: 7 %</div>
<svg class="a" style="left:387px;top:449.5px" width="51" height="74.0" viewBox="0 0 51 74.0"><path d="M2 4H38" stroke="#ababab" stroke-width="1" fill="none"/><path d="M2 7H20.5" stroke="#a8a8a8" stroke-width="1" fill="none"/><path d="M20.1 6.5V72.5H49" stroke="#a4a4a4" stroke-width="1.7" fill="none"/><path d="M0 4L2.2 2.5V5.5Z M0 7L2.2 5.5V8.5Z" fill="#9a9a9a"/></svg>
<svg class="a" style="left:454px;top:434px" width="19.4" height="19" viewBox="0 0 19.4 19"><rect x="0.4" y="0.4" width="17.2" height="15.0" rx="0.8" fill="url(#gB)" stroke="#8db6e6" stroke-width="0.8"/><rect x="0.4" y="0.4" width="17.2" height="2.6" fill="url(#gH)"/><path d="M1.5 5.44H16.5M1.5 7.88H16.5M1.5 10.32H16.5M1.5 12.76H16.5M5.00 3.4000000000000004V14.8M9.00 3.4000000000000004V14.8M13.00 3.4000000000000004V14.8" stroke="#ffffff" stroke-width="0.5" fill="none"/><rect x="12.2" y="10" width="6.8" height="8.8" rx="0.8" fill="url(#gC)" stroke="#4a63a0" stroke-width="0.5"/><rect x="13" y="11" width="5.2" height="1.6" fill="#b9c9ec"/><rect x="13" y="13.3" width="5.2" height="1.3" fill="#e0455a"/><path d="M13 15.6H18.2M13 17.1H18.2M14.7 13.3V18.3M16.5 13.3V18.3" stroke="#8ea3d6" stroke-width="0.45"/></svg>
<div class="nl" style="left:393.30px;top:456.10px">Compute Scalar</div><div class="nl" style="left:393.30px;top:467.20px"><b>开销</b>: 0 %</div>
<svg class="a" style="left:502px;top:451.2px" width="33.299999999999955" height="8" viewBox="0 0 33.299999999999955 8"><path d="M1 4H33.299999999999955" stroke="#a2a2a2" stroke-width="1" fill="none"/><path d="M0 4L2.4 2.6V5.4Z" fill="#9a9a9a"/></svg>
<svg class="a" style="left:559.8px;top:431px" width="18.6" height="15.6" viewBox="0 0 18.6 15.6"><rect x="0.4" y="0.4" width="17.8" height="14.799999999999999" rx="0.8" fill="url(#gB)" stroke="#8db6e6" stroke-width="0.8"/><rect x="0.4" y="0.4" width="17.8" height="2.6" fill="url(#gH)"/><path d="M1.5 5.40H17.1M1.5 7.80H17.1M1.5 10.20H17.1M1.5 12.60H17.1M5.15 3.4000000000000004V14.6M9.30 3.4000000000000004V14.6M13.45 3.4000000000000004V14.6" stroke="#ffffff" stroke-width="0.5" fill="none"/><path d="M8.3 3.4H10.5V10.4H12L9.4 13.6L6.8 10.4H8.3Z" fill="#3f86da"/></svg>
<div class="nl" style="left:498.70px;top:451.90px">Table Scan</div><div class="nl" style="left:498.70px;top:462.30px">[Arrays] [a]</div><div class="nl" style="left:498.70px;top:472.80px"><b>开销</b>: 8 %</div>
<svg class="a" style="left:454px;top:502.3px" width="18" height="16" viewBox="0 0 18 16"><rect x="0.4" y="0.4" width="17.2" height="15.2" rx="0.8" fill="url(#gB)" stroke="#8db6e6" stroke-width="0.8"/><rect x="0.4" y="0.4" width="17.2" height="2.6" fill="url(#gH)"/><path d="M1.5 5.48H16.5M1.5 7.96H16.5M1.5 10.44H16.5M1.5 12.92H16.5M5.00 3.4000000000000004V15M9.00 3.4000000000000004V15M13.00 3.4000000000000004V15" stroke="#ffffff" stroke-width="0.5" fill="none"/><path d="M5 5.2H13.6L10.6 8.6V12.6H8.2V8.6Z" fill="#3f86da"/></svg>
<div class="nl" style="left:394.00px;top:523.60px">Filter</div>
<svg class="a" style="left:492px;top:517.6px" width="34" height="8" viewBox="0 0 34 8"><path d="M1.5 4H34" stroke="#9c9c9c" stroke-width="1.6" fill="none"/><path d="M0 4L2.8 2V6Z" fill="#969696"/></svg>
<svg class="a" style="left:550.6px;top:496.3px" width="18.4" height="17.4" viewBox="0 0 18.4 17.4"><path d="M3.3 3V0.9H17.5V16.5H3.3V6.6" fill="#fff" stroke="#2f82d8" stroke-width="1.5"/><path d="M0.2 7.3L3.3 3.9L6.4 7.3Z" fill="#3f92e6"/><path d="M7.4 4.8H14V7L15.3 8.2V11L14 12.2V14H7.4Z" fill="#7d5fa6"/><path d="M9.1 6.4H12.6V12.4H9.1Z" fill="#fbf9fe"/><path d="M11.4 7.6L13.4 9.4L11.4 11.2Z" fill="#9c8fd0"/></svg>
<div class="nl" style="left:490.00px;top:518.30px">Nested Loops</div>
<svg class="a" style="left:594px;top:515.4px" width="92" height="19.600000000000023" viewBox="0 0 92 19.600000000000023"><path d="M2 4H90" stroke="#ababab" stroke-width="1" fill="none"/><path d="M2 8.4H32.60000000000002V18.600000000000023" stroke="#949494" stroke-width="1" fill="none"/><path d="M0 4L2.2 2.5V5.5Z M0 8.4L2.2 6.9V9.9Z" fill="#9a9a9a"/></svg>
<svg class="a" style="left:713px;top:501.3px" width="19.4" height="19" viewBox="0 0 19.4 19"><rect x="0.4" y="0.4" width="17.2" height="15.0" rx="0.8" fill="url(#gB)" stroke="#8db6e6" stroke-width="0.8"/><rect x="0.4" y="0.4" width="17.2" height="2.6" fill="url(#gH)"/><path d="M1.5 5.44H16.5M1.5 7.88H16.5M1.5 10.32H16.5M1.5 12.76H16.5M5.00 3.4000000000000004V14.8M9.00 3.4000000000000004V14.8M13.00 3.4000000000000004V14.8" stroke="#ffffff" stroke-width="0.5" fill="none"/><rect x="12.2" y="10" width="6.8" height="8.8" rx="0.8" fill="url(#gC)" stroke="#4a63a0" stroke-width="0.5"/><rect x="13" y="11" width="5.2" height="1.6" fill="#b9c9ec"/><rect x="13" y="13.3" width="5.2" height="1.3" fill="#e0455a"/><path d="M13 15.6H18.2M13 17.1H18.2M14.7 13.3V18.3M16.5 13.3V18.3" stroke="#8ea3d6" stroke-width="0.45"/></svg>
<div class="nl" style="left:652.00px;top:524.00px">Compute Scalar</div>
<svg class="a" style="left:761.3px;top:517.3px" width="33.200000000000045" height="8" viewBox="0 0 33.200000000000045 8"><path d="M1 4H33.200000000000045" stroke="#a2a2a2" stroke-width="1" fill="none"/><path d="M0 4L2.4 2.6V5.4Z" fill="#9a9a9a"/></svg>
<svg class="a" style="left:821.2px;top:501px" width="18.8" height="17.5" viewBox="0 0 18.8 17.5"><rect x="0.4" y="1.6" width="18" height="15.4" rx="1.2" fill="url(#gB)" stroke="#5b94d6" stroke-width="0.8"/><rect x="0.4" y="1.6" width="18" height="2.6" fill="url(#gH)"/><path d="M8.4 0H10.4V11H12.2L9.4 14.6L6.6 11H8.4Z" fill="#2f7ad6"/></svg>
<div class="nl" style="left:761.00px;top:524.00px">Constant Scan</div>
</div></div>
<div class="sb" style="left:992px;top:427px;width:12px;height:104px"></div>
<svg class="a" style="left:995px;top:431px" width="6" height="4" viewBox="0 0 6 4"><path d="M0.3 3.7L3 0.4L5.7 3.7Z" fill="#555"/></svg>
<div class="a" style="left:992.5px;top:440.5px;width:11px;height:63px;background:linear-gradient(90deg,#f6f6f6,#d9d9d9);border:1px solid #b0b0b0;border-radius:1.5px"></div>
<svg class="a" style="left:995px;top:468.5px" width="6" height="6" viewBox="0 0 6 6"><path d="M0.5 1H5.5M0.5 3H5.5M0.5 5H5.5" stroke="#777" stroke-width="0.7"/></svg>
<div class="sb" style="left:1004px;top:81px;width:13px;height:450px"></div>
<svg class="a" style="left:1007.5px;top:85px" width="6" height="4" viewBox="0 0 6 4"><path d="M0.3 3.7L3 0.4L5.7 3.7Z" fill="#555"/></svg>
<div class="a" style="left:1005px;top:94.5px;width:11px;height:387px;background:linear-gradient(90deg,#f7f7f7,#d8d8d8);border:1px solid #b4b4b4;border-radius:1.5px"></div>
<svg class="a" style="left:1007.5px;top:284px" width="6" height="6" viewBox="0 0 6 6"><path d="M0.5 1H5.5M0.5 3H5.5M0.5 5H5.5" stroke="#777" stroke-width="0.7"/></svg>
<svg class="a" style="left:1007.5px;top:520.5px" width="6" height="4" viewBox="0 0 6 4"><path d="M0.3 0.3L3 3.6L5.7 0.3Z" fill="#555"/></svg>
<div class="a" style="left:5px;top:531px;width:1014px;height:1px;background:#9aa0ac"></div>
<div class="a" style="left:91px;top:63px;width:64.5px;height:18px;background:#fff;border:1px solid #9a9a9a;border-bottom:none"></div>
<svg class="a" style="left:97px;top:64.5px" width="12" height="12" viewBox="0 0 12 12"><rect x="0.3" y="0.3" width="3.4" height="3" fill="#4d8fe0"/><rect x="8" y="0.3" width="3.6" height="3" fill="#4d8fe0"/><path d="M3.7 1.6H8M2 3.3V8" stroke="#4d8fe0" stroke-width="0.8" fill="none" stroke-dasharray="1 0.7"/><rect x="0.4" y="8" width="3.4" height="3.6" fill="#3fc23f" stroke="#2a8a2a" stroke-width="0.5"/></svg>
<div class="a" style="left:113.5px;top:64px;line-height:17px;font-size:9.3px;color:#111">执行计划</div>
<div class="a" style="left:5px;top:532px;width:1014px;height:20.8px;background:linear-gradient(#f2e48c,#f3e690 70%,#f6eba6);border-radius:0 0 2px 2px"></div>
<div class="a" style="left:5px;top:532px;width:1014px;height:1px;background:#fbf4c4"></div>
<svg class="a" style="left:6.8px;top:535.2px" width="12.6" height="12.6" viewBox="0 0 12 12"><circle cx="6" cy="6" r="5.6" fill="#3f9e3f" stroke="#2c7a2c" stroke-width="0.6"/><circle cx="6" cy="4.6" r="4" fill="#6cc56c" opacity="0.55"/><path d="M3 6.2L5.2 8.4L9 3.8" stroke="#fff" stroke-width="1.5" fill="none"/></svg>
<div class="st" style="left:22px;font-size:9.1px">查询已成功执行。</div>
<div class="sep" style="left:635.5px"></div>
<div class="sep" style="left:781.5px"></div>
<div class="sep" style="left:887.3px"></div>
<div class="sep" style="left:931.5px"></div>
<div class="sep" style="left:978.3px"></div>
<div class="st" style="left:639.5px;font-size:9.65px">HUANG-PC\DENALI (11.0 RTM)</div>
<div class="st" style="left:786px;font-size:9.65px">Huang-PC\Huang (51)</div>
<div class="st" style="left:891.7px;font-size:9.9px">tempdb</div>
<div class="st" style="left:936.7px">00:00:02</div>
<div class="st" style="left:983px">48 行</div>
<div class="a" style="left:3px;top:561px;line-height:12px;font-size:9px;color:#e6e9f2">就绪</div>
<div class="a" style="left:4px;top:38px;width:1px;height:3px;background:rgba(255,232,166,0.55)"></div>
<div class="a" style="left:1019px;top:38px;width:1px;height:3px;background:rgba(255,232,166,0.4)"></div>
<div class="a" style="left:4px;top:41px;width:1px;height:39px;background:rgba(238,238,238,0.55)"></div>
<div class="a" style="left:1019px;top:41px;width:1px;height:39px;background:rgba(238,238,238,0.4)"></div>
<div class="a" style="left:4px;top:80px;width:1px;height:452px;background:rgba(250,250,250,0.55)"></div>
<div class="a" style="left:1019px;top:80px;width:1px;height:452px;background:rgba(250,250,250,0.4)"></div>
<div class="a" style="left:4px;top:532px;width:1px;height:20px;background:rgba(243,229,143,0.55)"></div>
<div class="a" style="left:1019px;top:532px;width:1px;height:20px;background:rgba(243,229,143,0.4)"></div>
</body></html>
